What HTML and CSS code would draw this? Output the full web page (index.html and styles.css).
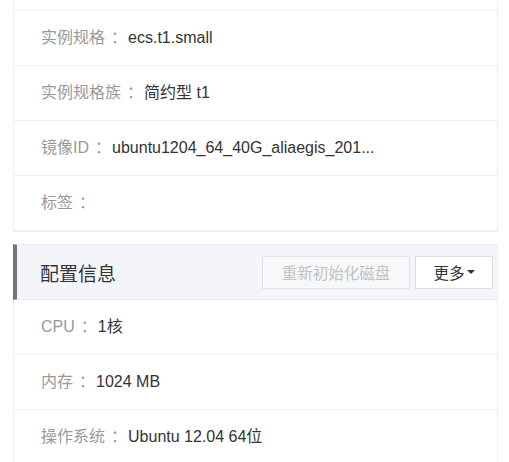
FILE: index.html
```html
<!DOCTYPE html>
<html lang="zh-CN">
<head>
<meta charset="UTF-8">
<meta name="viewport" content="width=device-width, initial-scale=1.0">
<title>实例详情</title>
<link rel="stylesheet" href="styles.css">
</head>
<body>

<div class="page">
  <div class="panel panel-top">
    <div class="row"></div>
    <div class="row"><span class="label">实例规格<i>：</i></span><span class="value">ecs.t1.small</span></div>
    <div class="row"><span class="label">实例规格族<i>：</i></span><span class="value">简约型 t1</span></div>
    <div class="row"><span class="label">镜像ID<i>：</i></span><span class="value">ubuntu1204_64_40G_aliaegis_201...</span></div>
    <div class="row"><span class="label">标签<i>：</i></span></div>
  </div>

  <div class="panel">
    <div class="panel-head">
      <h3 class="title">配置信息</h3>
      <div class="actions">
        <button class="btn btn-disabled">重新初始化磁盘</button>
        <button class="btn btn-more">更多<span class="caret"></span></button>
      </div>
    </div>
    <div class="row"><span class="label">CPU<i>：</i></span><span class="value">1核</span></div>
    <div class="row"><span class="label">内存<i>：</i></span><span class="value">1024 MB</span></div>
    <div class="row"><span class="label">操作系统<i>：</i></span><span class="value">Ubuntu 12.04 64位</span></div>
  </div>
</div>

</body>
</html>
```

FILE: styles.css
```css
body {
  margin: 0;
  background: #fff;
  font-family: "Liberation Sans", "Noto Sans CJK SC", sans-serif;
  font-size: 16px;
  overflow: hidden;
}

.page {
  padding: 0 11px 0 13px;
}

.panel {
  border: 1px solid #eeeeee;
  border-top: none;
  margin-bottom: 12px;
}

.panel-top {
  margin-top: -44px;
}

.row {
  height: 54px;
  display: flex;
  align-items: center;
  padding-left: 27px;
  border-bottom: 1px solid #eeeeee;
  line-height: 20px;
}

.label {
  color: #999;
  margin-right: 1px;
}

.label i {
  font-style: normal;
  margin-left: 6px;
}

.value {
  color: #333;
}

.panel-head {
  height: 54px;
  display: flex;
  align-items: center;
  justify-content: space-between;
  background: #f4f5f8;
  border-left: 4px solid #747474;
  border-top: 1px solid #eeeeee;
  border-bottom: 1px solid #e6e6e6;
  margin-left: -1px;
}

.title {
  margin: 0 0 0 23px;
  font-size: 19px;
  font-weight: normal;
  color: #333;
}

.actions {
  display: flex;
  gap: 5px;
  margin-right: 4px;
}

.btn {
  height: 33px;
  padding: 0 12px;
  font-family: inherit;
  font-size: 15.5px;
  color: #333;
  background: #fff;
  border: 1px solid #dddddd;
  border-radius: 0;
  display: flex;
  align-items: center;
  justify-content: center;
}

.btn-more {
  width: 78px;
}

.btn-disabled {
  width: 148px;
  color: #c2c2c2;
  background: #f7f8fa;
  border-color: #e3e3e3;
}

.caret {
  display: inline-block;
  margin-left: 2px;
  border-top: 4px solid #333;
  border-left: 4px solid transparent;
  border-right: 4px solid transparent;
}
```
